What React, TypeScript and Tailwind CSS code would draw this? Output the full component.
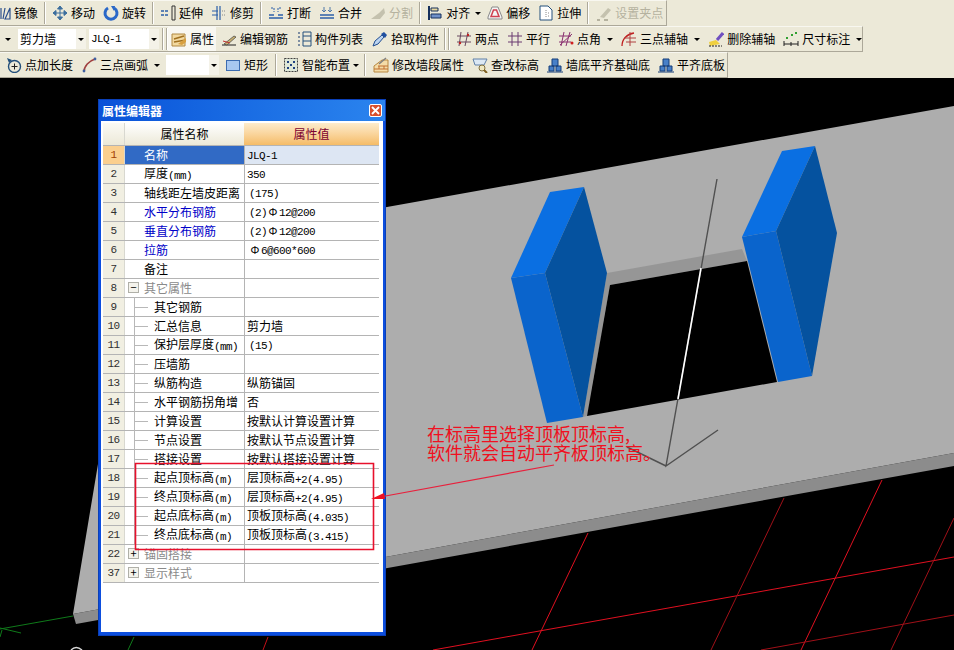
import React from "react";

const cjk = "font-['Noto_Sans_CJK_SC','Noto_Sans_CJK_JP',sans-serif]";

// --- toolbar icons ---
const Ico: React.FC<{ w?: number; children: React.ReactNode }> = ({ w = 16, children }) => (
  <svg width={w} height={16} viewBox={`${16 - w} 0 ${w} 16`} className="shrink-0" fill="none">
    {children}
  </svg>
);

const icons: Record<string, React.ReactNode> = {
  mirror: (
    <Ico w={11}>
      <path d="M6 14 V3 M8 14 L10 3 M10 14 L15 3 L15 14 Z" stroke="#2b4f8c" strokeWidth="1.2" />
    </Ico>
  ),
  move: (
    <Ico>
      <path d="M8 1 V15 M1 8 H15 M8 1 L5.5 4 H10.5 Z M8 15 L5.5 12 H10.5 Z M1 8 L4 5.5 V10.5 Z M15 8 L12 5.5 V10.5 Z" stroke="#3d6f9e" fill="#3d6f9e" strokeWidth="1" />
    </Ico>
  ),
  rotate: (
    <Ico>
      <path d="M5 3 A6 6 0 1 0 11 3" stroke="#2a68c8" strokeWidth="3" />
      <path d="M8 1 L12 1 L11 6 Z" fill="#2a68c8" />
    </Ico>
  ),
  extend: (
    <Ico>
      <path d="M1 6 H9 M1 10 H9" stroke="#2b5fa8" strokeWidth="1.5" strokeDasharray="3 1" />
      <path d="M12 1 V15 H15 V1 Z" stroke="#333" />
    </Ico>
  ),
  trim: (
    <Ico>
      <path d="M6 1 V15 M9 1 V15" stroke="#2b5fa8" strokeWidth="1.2" />
      <path d="M1 6 H7 M1 10 H7" stroke="#2b5fa8" strokeWidth="1.2" />
      <path d="M11 6 H15 M11 10 H15" stroke="#888" strokeDasharray="1 1" />
    </Ico>
  ),
  breakLine: (
    <Ico>
      <path d="M1 13 H15 M1 10 H6 M10 10 H15" stroke="#2b5fa8" strokeWidth="1.3" />
      <path d="M3 3 H6 V7 M13 3 H10 V7" stroke="#2b5fa8" strokeDasharray="2 1" />
    </Ico>
  ),
  merge: (
    <Ico>
      <path d="M1 13 H15 M1 10 H15" stroke="#2b5fa8" strokeWidth="1.3" />
      <path d="M5 2 V7 M11 2 V7 M3 5 L5 7 L7 5 M9 5 L11 7 L13 5" stroke="#4f78a8" />
    </Ico>
  ),
  split: (
    <Ico>
      <path d="M1 14 L9 8 L14 3 L15 8 L10 14 Z" fill="#c4c1ae" />
    </Ico>
  ),
  align: (
    <Ico>
      <path d="M2 1 V15" stroke="#16305c" strokeWidth="2" />
      <path d="M4 3 H11 V6 H4 Z" fill="#e8d8a0" stroke="#16305c" />
      <path d="M4 9 H14 V13 H4 Z" fill="#7090c8" stroke="#16305c" />
    </Ico>
  ),
  offset: (
    <Ico>
      <path d="M5 2 H11 L15 12 V14 H1 V12 Z" stroke="#8a8a8a" fill="#f4f4f4" />
      <path d="M6.5 5 H9.5 L12 11.5 H4 Z" stroke="#d04050" strokeWidth="1.5" />
    </Ico>
  ),
  stretch: (
    <Ico>
      <path d="M2 1 H10 L14 5 V15 H2 Z" stroke="#24507c" fill="#fff" />
      <path d="M8 5 V12 M10 8 H12 M10 11 H12" stroke="#888" strokeDasharray="1 1" />
    </Ico>
  ),
  grip: (
    <Ico>
      <path d="M4 12 L12 3 L15 5 L8 13 Z" fill="#c4c1ae" />
      <path d="M1 15 H4 M8 15 H12" stroke="#b5b29f" strokeWidth="2" />
    </Ico>
  ),
  attrs: (
    <Ico>
      <path d="M1 3 H14 V15 H1 Z" fill="#f2d9a0" stroke="#b08840" />
      <path d="M3 8 L13 5 M3 11 L15 9" stroke="#a07020" strokeWidth="1.5" />
      <path d="M7 13 L15 7 V11 L11 14 Z" fill="#d8a040" />
    </Ico>
  ),
  edit: (
    <Ico>
      <path d="M1 14 H15" stroke="#202020" />
      <path d="M3 13 L13 5 L15 6 L6 14 Z" fill="#c8b070" stroke="#404040" strokeWidth="0.7" />
      <path d="M2 10 L9 12" stroke="#c03030" />
    </Ico>
  ),
  list: (
    <Ico>
      <path d="M2 2 H4 M2 6 H4 M2 10 H4 M2 14 H4" stroke="#5a7090" strokeWidth="1.5" strokeDasharray="2 1" />
      <path d="M7 1 H15 V15 H7 Z M7 5 H15 M7 10 H15" stroke="#24507c" />
    </Ico>
  ),
  pick: (
    <Ico>
      <path d="M1 15 L3 10 L10 4 L12 6 L6 13 Z" fill="#bcd4f0" stroke="#204c90" />
      <path d="M9 3 L12 1 L15 4 L13 7 Z" fill="#2050a0" />
    </Ico>
  ),
  two: (
    <Ico>
      <path d="M1 5 H15 M1 11 H15 M5 1 L3 15 M12 1 L9 15" stroke="#6a4a60" />
      <circle cx="12" cy="4" r="1.2" fill="#c02020" />
      <circle cx="4" cy="12" r="1.2" fill="#c02020" />
    </Ico>
  ),
  parallel: (
    <Ico>
      <path d="M1 5 H15 M1 11 H15 M5 1 V15 M11 1 V15" stroke="#6a3a70" />
    </Ico>
  ),
  angle: (
    <Ico>
      <path d="M1 5 H13 M1 11 H13 M6 1 L3 15 M12 1 L8 15 M2 14 L14 3" stroke="#8a3070" />
      <circle cx="14" cy="12" r="1.5" fill="#d02020" />
    </Ico>
  ),
  three: (
    <Ico>
      <path d="M1 15 C1 8 6 3 13 2" stroke="#c02020" strokeWidth="1.3" />
      <path d="M9 1 V15 M3 7 H15 M5 11 H15" stroke="#b04040" />
    </Ico>
  ),
  del: (
    <Ico>
      <path d="M2 15 L1 11 L8 9 L12 13 Z" fill="#f0d040" />
      <path d="M9 9 L15 2" stroke="#7050c0" strokeWidth="3" />
      <path d="M1 15 H14" stroke="#202020" strokeDasharray="2 1" />
    </Ico>
  ),
  dim: (
    <Ico>
      <path d="M1 10 V15 M15 10 V15 M8 11 V15 M1 13 H15" stroke="#202020" />
      <path d="M3 7 H5 M8 4 H10 M12 2 H14" stroke="#30a030" strokeWidth="2" />
    </Ico>
  ),
  pointLen: (
    <Ico>
      <circle cx="8.5" cy="9.5" r="6" stroke="#24507c" strokeWidth="1.4" />
      <path d="M8.5 6.5 V12.5 M5.5 9.5 H11.5" stroke="#202020" />
      <path d="M1 1 L6 3 L3 6 Z" fill="#24507c" />
    </Ico>
  ),
  arc: (
    <Ico>
      <path d="M3 15 C3 9 8 4 14 2" stroke="#a04040" strokeWidth="1.6" />
      <circle cx="3" cy="14" r="1.4" fill="#4060a0" />
      <circle cx="14" cy="2" r="1.4" fill="#4060a0" />
    </Ico>
  ),
  rect: (
    <Ico>
      <rect x="1.5" y="3.5" width="13" height="10" fill="#a8c8f0" stroke="#3c6cb0" />
    </Ico>
  ),
  smart: (
    <Ico>
      <rect x="1.5" y="1.5" width="13" height="13" fill="#dfe8d8" stroke="#404040" strokeDasharray="2 1" />
      <path d="M4 4 H6 V6 H4 Z M10 4 H12 V6 H10 Z M7 7 H9 V9 H7 Z M4 10 H6 V12 H4 Z M10 10 H12 V12 H10 Z" fill="#204080" />
    </Ico>
  ),
  wall: (
    <Ico>
      <path d="M1 9 L9 3 H15 V15 H1 Z" fill="#f4dca8" stroke="#b88840" />
      <path d="M1 12 H15 M5 9 H15 M6 9 V12 M11 9 V12" stroke="#c07030" />
      <path d="M6 7 L13 1" stroke="#808080" strokeWidth="1.5" />
    </Ico>
  ),
  check: (
    <Ico>
      <path d="M1 2 H15 L12 8 H3 Z" fill="#dce8f4" stroke="#6080a8" />
      <circle cx="10" cy="11" r="3" fill="#f0e8c0" stroke="#807040" />
      <path d="M12 13 L15 16" stroke="#806020" strokeWidth="2" />
    </Ico>
  ),
  level: (
    <Ico>
      <path d="M5 2 H11 V9 H5 Z M2 9 H7 V14 H2 Z M9 9 H14 V14 H9 Z" fill="#4880c8" stroke="#143c78" />
      <path d="M0 15 H16" stroke="#143c78" />
    </Ico>
  ),
};

// --- toolbar pieces ---
const Tool: React.FC<{ icon: string; label: string; className?: string; off?: boolean }> = ({ icon, label, className = "", off }) => (
  <div className={`flex items-center gap-[3px] shrink-0 ${className}`}>
    {icons[icon]}
    <span className={`text-[12px] leading-none whitespace-nowrap ${off ? "text-[#b5b29f]" : "text-black"}`}>{label}</span>
  </div>
);

const Sep: React.FC<{ className: string }> = ({ className }) => (
  <div className={`w-[2px] h-[22px] shrink-0 border-l border-l-[#aca899] border-r border-r-white ${className}`} />
);

const Caret: React.FC<{ className: string }> = ({ className }) => (
  <div className={`w-0 h-0 shrink-0 border-x-[3px] border-x-transparent border-t-[3px] border-t-black ${className}`} />
);

const Combo: React.FC<{ className: string; children?: React.ReactNode }> = ({ className, children }) => (
  <div className={`h-[20px] flex items-center shrink-0 bg-[#f4f2e8] ${className}`}>
    <div className="flex-1 h-full bg-white flex items-center pl-[2px] text-[12px] leading-none text-black whitespace-nowrap">{children}</div>
    <div className="w-[10px] flex justify-center">
      <Caret className="" />
    </div>
  </div>
);

const Bar: React.FC<{ className: string; children: React.ReactNode }> = ({ className, children }) => (
  <div className={`h-[26px] flex items-center border-r border-r-[#aca899] border-b border-b-[#aca899] border-t border-t-[#f8f7f0] ${className}`}>
    {children}
  </div>
);

// --- property table ---
interface Row {
  n: number;
  name: string;
  value?: string;
  kind?: "top" | "blue" | "group" | "child" | "selected";
  box?: "+" | "-";
}

const rows: Row[] = [
  { n: 1, name: "名称", value: "JLQ-1", kind: "selected" },
  { n: 2, name: "厚度(mm)", value: "350", kind: "top" },
  { n: 3, name: "轴线距左墙皮距离", value: "(175)", kind: "top" },
  { n: 4, name: "水平分布钢筋", value: "(2)Φ12@200", kind: "blue" },
  { n: 5, name: "垂直分布钢筋", value: "(2)Φ12@200", kind: "blue" },
  { n: 6, name: "拉筋", value: "Φ6@600*600", kind: "blue" },
  { n: 7, name: "备注", kind: "top" },
  { n: 8, name: "其它属性", kind: "group", box: "-" },
  { n: 9, name: "其它钢筋", kind: "child" },
  { n: 10, name: "汇总信息", value: "剪力墙", kind: "child" },
  { n: 11, name: "保护层厚度(mm)", value: "(15)", kind: "child" },
  { n: 12, name: "压墙筋", kind: "child" },
  { n: 13, name: "纵筋构造", value: "纵筋锚固", kind: "child" },
  { n: 14, name: "水平钢筋拐角增", value: "否", kind: "child" },
  { n: 15, name: "计算设置", value: "按默认计算设置计算", kind: "child" },
  { n: 16, name: "节点设置", value: "按默认节点设置计算", kind: "child" },
  { n: 17, name: "搭接设置", value: "按默认搭接设置计算", kind: "child" },
  { n: 18, name: "起点顶标高(m)", value: "层顶标高+2(4.95)", kind: "child" },
  { n: 19, name: "终点顶标高(m)", value: "层顶标高+2(4.95)", kind: "child" },
  { n: 20, name: "起点底标高(m)", value: "顶板顶标高(4.035)", kind: "child" },
  { n: 21, name: "终点底标高(m)", value: "顶板顶标高(3.415)", kind: "child" },
  { n: 22, name: "锚固搭接", kind: "group", box: "+" },
  { n: 37, name: "显示样式", kind: "group", box: "+" },
];

// latin runs are narrow (6px a char) next to the 12px hanzi
const Mixed: React.FC<{ text: string }> = ({ text }) => {
  const withHanzi = /[\u4e00-\u9fff]/.test(text);
  return (
    <>
      {text.split(/([\x20-\x7e]+|Φ)/).map((part, i) =>
        part === "Φ" ? (
          <span key={i} className="inline-block w-[12px] text-center text-[11px]">
            {part}
          </span>
        ) : /^[\x20-\x7e]+$/.test(part) ? (
          <span key={i} className={`font-['Liberation_Mono',monospace] text-[11px] tracking-[-0.6px] ${withHanzi ? "align-[-1px]" : ""}`}>
            {part}
          </span>
        ) : (
          <span key={i}>{part}</span>
        )
      )}
    </>
  );
};

const PropRow: React.FC<{ row: Row }> = ({ row }) => {
  const { n, name, value, kind, box } = row;
  const selected = kind === "selected";
  const nameColor = selected ? "text-white" : kind === "blue" ? "text-[#0000c8]" : kind === "group" ? "text-[#8a8a8a]" : "text-black";
  const inset = value && /^[(Φ]/.test(value);
  return (
    <div className="flex h-[19px] border-b border-b-[#b4b4b4] text-[12px] leading-none">
      <div className={`w-[21px] shrink-0 flex items-center justify-center font-['Liberation_Mono',monospace] text-[11px] tracking-[-0.6px] ${selected ? "bg-[#fbcf8e] text-[#a04000]" : "bg-[#f1efe2] text-[#303030]"}`}>
        {n}
      </div>
      <div className={`relative w-[120px] shrink-0 flex items-center border-l border-l-[#d8d8d0] whitespace-nowrap ${selected ? "bg-[#316ac5]" : ""}`}>
        {box && (
          <div className="absolute left-[3px] top-[3px] w-[11px] h-[11px] border border-[#b0b0a8] bg-[#f4f3ec] flex items-center justify-center text-[11px] leading-none text-black">
            {box === "+" ? "+" : "−"}
          </div>
        )}
        {kind === "child" && (
          <>
            <div className="absolute left-[9px] top-[-1px] h-[20px] w-px bg-[#b8b8b8]" />
            <div className="absolute left-[9px] top-[9px] h-px w-[14px] bg-[#b8b8b8]" />
          </>
        )}
        <span className={`${nameColor} ${kind === "child" ? "pl-[29px]" : "pl-[19px]"}`}>
          <Mixed text={name} />
        </span>
      </div>
      <div className={`flex-1 flex items-center border-l border-l-[#b4b4b4] whitespace-nowrap text-black ${inset ? "pl-[4px]" : "pl-[2px]"} ${selected ? "bg-[#dde6f3]" : ""}`}>
        <div>{value && <Mixed text={value} />}</div>
      </div>
    </div>
  );
};

const PropertyEditor: React.FC = () => (
  <div className="absolute left-[98px] top-[21px] w-[288px] h-[537px] flex flex-col bg-[#0c4ede] border-[1px] border-[#0a3fb8]">
    <div className="h-[21px] shrink-0 flex items-center justify-between pl-[3px] pr-[3px] bg-gradient-to-r from-[#0a52d8] to-[#2b84ee]">
      <span className="text-[12px] font-bold leading-none text-white">属性编辑器</span>
      <div className="w-[13px] h-[13px] rounded-[2px] border border-white bg-[#d8502c] flex items-center justify-center">
        <svg width="9" height="9" viewBox="0 0 9 9">
          <path d="M1 1 L8 8 M8 1 L1 8" stroke="#fff" strokeWidth="1.8" />
        </svg>
      </div>
    </div>
    <div className="flex-1 mx-[2px] mb-[3px] bg-white pl-[2px] pt-[2px]">
      <div className="w-[276px]">
        <div className="flex h-[23px] text-[12px] leading-none border-b border-b-[#b4b4b4]">
          <div className="w-[21px] shrink-0 bg-gradient-to-b from-[#fbfaf5] to-[#ece9d8]" />
          <div className="w-[120px] shrink-0 flex items-center justify-center border-l border-l-[#d8d8d0] bg-gradient-to-b from-white to-[#ece9d8] text-black">属性名称</div>
          <div className="flex-1 flex items-center justify-center bg-gradient-to-b from-[#fdeccc] to-[#f5bc66] text-[#7c0030]">属性值</div>
        </div>
        {rows.map((row) => (
          <PropRow key={row.n} row={row} />
        ))}
      </div>
    </div>
  </div>
);

// --- 3d view, drawn in page coordinates ---
const Scene: React.FC = () => (
  <svg className="absolute inset-0" width="954" height="572" viewBox="0 78 954 572">
    {/* ground grid */}
    <g stroke="#e01020" strokeWidth="1" fill="none">
      <path d="M588 533 L532 650" />
      <path d="M882 480 L801 650" />
      <path d="M433 650 L954 557" />
    </g>
    <g stroke="#a01018" strokeWidth="1" fill="none">
      <path d="M784 498 L711 650" />
      <path d="M954 518 L891 650" />
      <path d="M761 650 L954 615" />
    </g>
    <path d="M268 637 L263 650" stroke="#c01018" />
    {/* slab */}
    <path d="M73 614 L954 453 L954 466 L76 624 Z" fill="#8c8c8c" />
    <path d="M387 207 L954 106 L954 453 L73 614 L99 458 L99 260 Z" fill="#adadad" />
    {/* opening */}
    <path d="M607 273 L742 249 L747 261 L610 285 L587 416 L583 417 Z" fill="#969696" />
    <path d="M610 285 L747 261 L777 382 L587 416 Z" fill="#000" />
    {/* piers */}
    <path d="M550 192 L584 187 L545 273 L511 278 Z" fill="#0a6fe2" />
    <path d="M511 278 L545 273 L583 417 L547 423 Z" fill="#0a64cc" />
    <path d="M584 187 L607 273 L583 417 L545 273 Z" fill="#05529f" />
    <path d="M782 151 L815 146 L776 231 L742 237 Z" fill="#0a6fe2" />
    <path d="M742 237 L776 231 L812 376 L778 382 Z" fill="#0a64cc" />
    <path d="M815 146 L837 233 L812 376 L776 231 Z" fill="#05529f" />
    {/* axes */}
    <g stroke="#505050" strokeWidth="1.4" fill="none">
      <path d="M717 179 L666 466 L718 430 M666 466 L627 447" />
    </g>
    <path d="M701 268 L678 399" stroke="#fff" strokeWidth="1.6" />
    <g stroke="#0f7a1a" fill="none">
      <path d="M73 616 L0 629 M0 628 L21 633 M2 630 L0 637" />
      <path d="M134 637 L128 650" />
    </g>
    <path d="M71 650 Q76 645 82 650" stroke="#d8d8d8" strokeWidth="1.5" fill="none" />
  </svg>
);

const Markup: React.FC = () => (
  <svg className="absolute inset-0" width="954" height="572" viewBox="0 78 954 572">
    <path d="M135.5 463.5 H373.5 V549.5 H135.5 Z" fill="none" stroke="#e8102c" strokeWidth="1.6" />
    <path d="M554 465 L380 497" stroke="#e8203c" strokeWidth="1.2" />
    <path d="M371 499 L384 493 L385 499 Z" fill="#f01020" />
  </svg>
);

const App: React.FC = () => (
  <div className={`w-[954px] h-[650px] overflow-hidden flex flex-col bg-[#ece9d8] ${cjk}`}>
    <Bar className="w-[667px]">
      <Tool icon="mirror" label="镜像" />
      <Sep className="ml-[6px]" />
      <Tool icon="move" label="移动" className="ml-[6px]" />
      <Tool icon="rotate" label="旋转" className="ml-[8px]" />
      <Sep className="ml-[6px]" />
      <Tool icon="extend" label="延伸" className="ml-[6px]" />
      <Tool icon="trim" label="修剪" className="ml-[8px]" />
      <Sep className="ml-[6px]" />
      <Tool icon="breakLine" label="打断" className="ml-[6px]" />
      <Tool icon="merge" label="合并" className="ml-[8px]" />
      <Tool icon="split" label="分割" className="ml-[8px]" off />
      <Sep className="ml-[6px]" />
      <Tool icon="align" label="对齐" className="ml-[6px]" />
      <Caret className="ml-[5px]" />
      <Tool icon="offset" label="偏移" className="ml-[6px]" />
      <Tool icon="stretch" label="拉伸" className="ml-[8px]" />
      <Sep className="ml-[6px]" />
      <Tool icon="grip" label="设置夹点" className="ml-[7px]" off />
    </Bar>
    <Bar className="w-[863px]">
      <Caret className="ml-[5px]" />
      <Combo className="ml-[7px] w-[68px]">剪力墙</Combo>
      <Combo className="ml-[3px] w-[70px]">
        <Mixed text="JLQ-1" />
      </Combo>
      <Sep className="ml-[3px]" />
      <Sep className="ml-[2px]" />
      <Tool icon="attrs" label="属性" className="h-[24px] pl-[3px] pr-[2px] bg-[#f8f7f1]" />
      <Tool icon="edit" label="编辑钢筋" className="ml-[5px]" />
      <Tool icon="list" label="构件列表" className="ml-[8px]" />
      <Tool icon="pick" label="拾取构件" className="ml-[9px]" />
      <Sep className="ml-[5px]" />
      <Sep className="ml-[2px]" />
      <Tool icon="two" label="两点" className="ml-[6px]" />
      <Tool icon="parallel" label="平行" className="ml-[8px]" />
      <Tool icon="angle" label="点角" className="ml-[8px]" />
      <Caret className="ml-[6px]" />
      <Tool icon="three" label="三点辅轴" className="ml-[8px]" />
      <Caret className="ml-[6px]" />
      <Tool icon="del" label="删除辅轴" className="ml-[8px]" />
      <Tool icon="dim" label="尺寸标注" className="ml-[8px]" />
      <Caret className="ml-[6px]" />
    </Bar>
    <Bar className="w-[728px]">
      <Tool icon="pointLen" label="点加长度" className="ml-[6px]" />
      <Tool icon="arc" label="三点画弧" className="ml-[8px]" />
      <Caret className="ml-[6px]" />
      <Combo className="ml-[6px] w-[53px]" />
      <Tool icon="rect" label="矩形" className="ml-[6px]" />
      <Sep className="ml-[7px]" />
      <Tool icon="smart" label="智能布置" className="ml-[6px]" />
      <Caret className="ml-[3px]" />
      <Sep className="ml-[5px]" />
      <Tool icon="wall" label="修改墙段属性" className="ml-[7px]" />
      <Tool icon="check" label="查改标高" className="ml-[8px]" />
      <Tool icon="level" label="墙底平齐基础底" className="ml-[8px]" />
      <Tool icon="level" label="平齐底板" className="ml-[8px]" />
    </Bar>
    <div className="relative flex-1 bg-black overflow-hidden">
      <Scene />
      <PropertyEditor />
      <Markup />
      <div className="absolute left-[427px] top-[346px] text-[18px] leading-[19px] text-[#f01020] whitespace-nowrap">
        <div>在标高里选择顶板顶标高,</div>
        <div>软件就会自动平齐板顶标高。</div>
      </div>
    </div>
  </div>
);

export default App;
